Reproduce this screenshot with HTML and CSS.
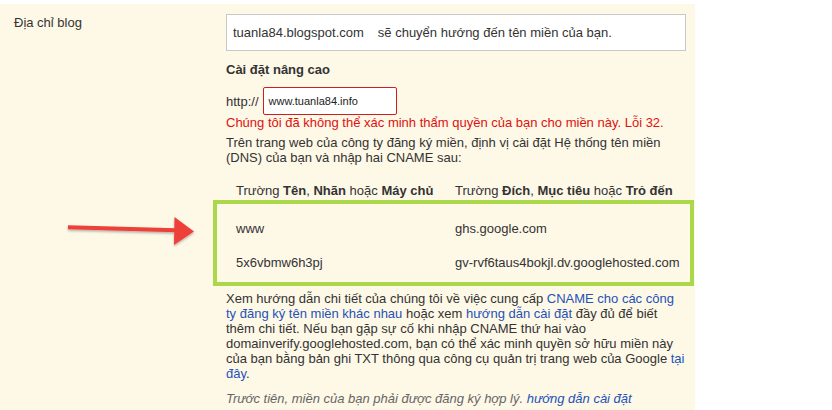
FILE: index.html
```html
<!DOCTYPE html>
<html lang="vi">
<head>
<meta charset="utf-8">
<link rel="stylesheet" href="styles.css">
</head>
<body>
<div class="page">
  <div class="panel">
    <div class="label">Địa chỉ blog</div>
    <div class="content">
      <div class="blogbox"><span>tuanla84.blogspot.com</span><span class="redirect">sẽ chuyển hướng đến tên miền của bạn.</span></div>
      <div class="adv">Cài đặt nâng cao</div>
      <div class="http-row"><span>http://</span><span class="domain-input">www.tuanla84.info</span></div>
      <div class="error">Chúng tôi đã không thể xác minh thẩm quyền của bạn cho miền này. Lỗi 32.</div>
      <p class="intro">Trên trang web của công ty đăng ký miền, định vị cài đặt Hệ thống tên miền (DNS) của bạn và nhập hai CNAME sau:</p>
      <div class="cname-head">
        <div>Trường <b>Tên</b>, <b>Nhãn</b> hoặc <b>Máy chủ</b></div>
        <div>Trường <b>Đích</b>, <b>Mục tiêu</b> hoặc <b>Trỏ đến</b></div>
      </div>
      <div class="cname-box">
        <div>www</div><div>ghs.google.com</div>
        <div>5x6vbmw6h3pj</div><div>gv-rvf6taus4bokjl.dv.googlehosted.com</div>
      </div>
      <p class="help">Xem hướng dẫn chi tiết của chúng tôi về việc cung cấp <a href="#">CNAME cho các công ty đăng ký tên miền khác nhau</a> hoặc xem <a href="#">hướng dẫn cài đặt</a> đầy đủ để biết thêm chi tiết. Nếu bạn gặp sự cố khi nhập CNAME thứ hai vào domainverify.googlehosted.com, bạn có thể xác minh quyền sở hữu miền này của bạn bằng bản ghi TXT thông qua công cụ quản trị trang web của Google <a href="#">tại đây</a>.</p>
      <p class="note">Trước tiên, miền của bạn phải được đăng ký hợp lý. <a href="#">hướng dẫn cài đặt</a></p>
    </div>
  </div>
  <svg class="arrow" width="140" height="40" viewBox="0 0 140 40">
    <defs>
      <filter id="sh" x="-10%" y="-30%" width="130%" height="180%">
        <feDropShadow dx="0" dy="1.5" stdDeviation="1.2" flood-color="#000" flood-opacity="0.3"/>
      </filter>
    </defs>
    <g filter="url(#sh)" fill="#ec4138">
      <path d="M4 12.2 L112 15.3 L111.8 19.3 L4 16.2 Z"/>
      <path d="M110.5 4 L130 18.5 L110 32 Z"/>
    </g>
  </svg>
</div>
</body>
</html>
```

FILE: styles.css
```css
* { box-sizing: border-box; }
html, body { margin: 0; padding: 0; background: #fff; }
body {
  font-family: "Liberation Sans", Arial, Helvetica, sans-serif;
  font-size: 13px;
  color: #333;
  width: 832px;
  height: 410px;
  overflow: hidden;
}
.page { position: relative; width: 832px; height: 410px; padding-top: 4px; }
.panel {
  width: 695px;
  height: 406px;
  background: #fef8e7;
  display: grid;
  grid-template-columns: 226px 460px;
}
.label { padding: 10px 0 0 14px; line-height: 17px; }
.content { padding-top: 10px; line-height: 15px; }
.blogbox {
  height: 37px;
  border: 1px solid #c9c9c9;
  background: #fff;
  padding: 0 6px;
  display: flex;
  align-items: center;
}
.redirect { margin-left: 14px; }
.adv { font-weight: bold; margin-top: 11px; }
.http-row { display: flex; align-items: center; margin-top: 10px; height: 28px; }
.domain-input {
  margin-left: 4px;
  width: 134px;
  height: 28px;
  border: 1px solid #d01d1d;
  border-radius: 2px;
  background: #fff;
  font-size: 11px;
  color: #222;
  padding-left: 5px;
  display: flex;
  align-items: center;
}
.error { color: #dd1111; margin-top: 0; }
.intro { margin: 5px 0 0; }
.cname-head {
  display: grid;
  grid-template-columns: 219px 1fr;
  padding-left: 10px;
  margin-top: 18px;
}
.cname-box {
  margin: 2px -8px 0 -13px;
  border: 4px solid #aad84a;
  display: grid;
  grid-template-columns: 219px 1fr;
  align-content: start;
  row-gap: 19px;
  padding: 17px 0 0 19px;
  height: 86px;
}
.help { margin: 5px 0 0; }
.help a, .note a { color: #2452b8; text-decoration: none; }
.note { margin: 10px 0 0; font-style: italic; color: #666; }
.arrow { position: absolute; left: 64px; top: 213px; }
```
